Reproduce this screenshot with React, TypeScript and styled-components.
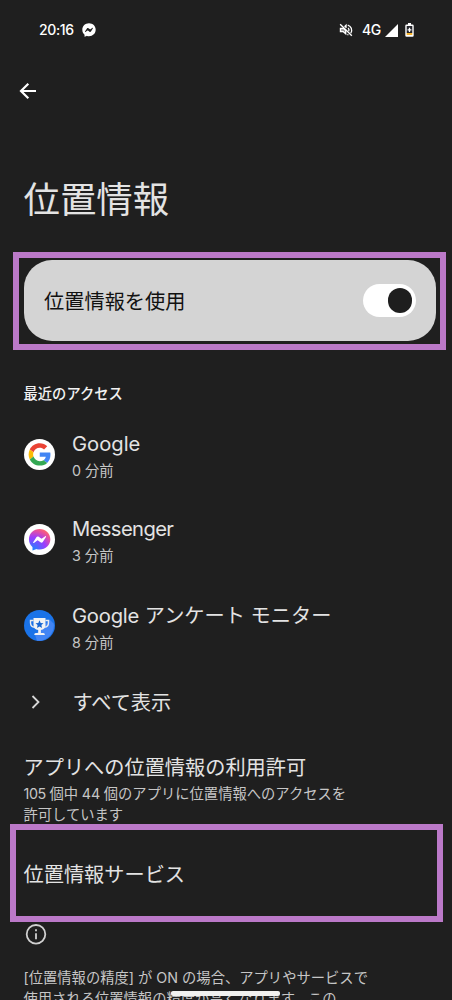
import React, { useId } from 'react';
import styled, { createGlobalStyle } from 'styled-components';

const GlobalStyle = createGlobalStyle`
  * { box-sizing: border-box; }
  html, body { margin: 0; padding: 0; background: #1f1f1f; }
  body { overflow: hidden; }
`;

const Screen = styled.main`
  position: relative;
  width: 452px;
  height: 1000px;
  overflow: hidden;
  display: flex;
  flex-direction: column;
  background: #1f1f1f;
  color: #e3e3e3;
  font-family: Inter, 'Noto Sans CJK JP', sans-serif;
`;

const StatusBar = styled.header`
  flex: none;
  height: 60px;
  padding: 0 38px 0 39px;
  display: flex;
  align-items: center;
  color: #fff;
`;

const Clock = styled.span`
  width: 43px;
  font: 500 14px/20px Inter, sans-serif;
  letter-spacing: -0.35px;
`;

const StatusIcons = styled.div`
  margin-left: auto;
  display: flex;
  align-items: center;
`;

const Network = styled.span`
  margin: 0 3px 0 9px;
  width: 20px;
  font: 500 14px/20px Inter, sans-serif;
  letter-spacing: -0.4px;
`;

const Toolbar = styled.nav`
  flex: none;
  height: 62px;
  padding-left: 16px;
  display: flex;
  align-items: center;
`;

const BackButton = styled.button`
  width: 24px;
  height: 24px;
  padding: 0;
  border: 0;
  background: none;
  color: #fff;
`;

const Title = styled.h1`
  flex: none;
  margin: 50px 0 0 23.5px;
  height: 52px;
  font-family: 'Noto Sans CJK JP', sans-serif;
  font-size: 36.4px;
  line-height: 50px;
  font-weight: 400;
`;

const Highlight = styled.section<{ $left: number; $width: number; $top: number }>`
  flex: none;
  margin: ${p => p.$top}px 0 0 ${p => p.$left}px;
  width: ${p => p.$width}px;
  height: 98.6px;
  border: 6px solid #bb79c8;
`;

const MasterSwitch = styled.div`
  margin: 2.4px 3.8px 0 4.6px;
  height: 81px;
  padding: 0 20.2px 0 20.5px;
  border-radius: 28px;
  display: flex;
  align-items: center;
  justify-content: space-between;
  background: #d4d4d4;
  color: #111;
  font-size: 20.2px;
  line-height: 30px;
`;

const SwitchLabel = styled.span`
  padding-top: 2px;
`;

const Track = styled.span`
  width: 53px;
  height: 33px;
  padding: 4px;
  border-radius: 17px;
  display: flex;
  justify-content: flex-end;
  background: #fff;
`;

const Knob = styled.span`
  width: 24.5px;
  height: 24.5px;
  border-radius: 50%;
  background: #1e1e1e;
`;

const SectionHeading = styled.h2`
  flex: none;
  margin: 34px 0 0 23.5px;
  font-size: 14.3px;
  line-height: 20px;
  font-weight: 500;
  color: #f2f2f2;
`;

const AppList = styled.ul`
  flex: none;
  margin: 21px 0 0;
  padding: 0;
  list-style: none;
`;

const AppRow = styled.li<{ $height: number }>`
  height: ${p => p.$height}px;
  padding-left: 24px;
  display: flex;
  align-items: flex-start;
`;

const AppIcon = styled.span`
  width: 48px;
  height: 31px;
  margin-top: 13.5px;
`;

const RowText = styled.div<{ $offset?: number }>`
  padding-top: ${p => p.$offset ?? 4}px;
  display: flex;
  flex-direction: column;
  gap: 1.5px;
`;

const ItemTitle = styled.span`
  font-size: 20.2px;
  line-height: 30px;
  white-space: pre;
`;

const LatinText = styled.span<{ $tracking: number }>`
  letter-spacing: ${p => p.$tracking}px;
`;

const Caption = styled.span`
  font-size: 14.3px;
  line-height: 20.5px;
  color: #c6c6c6;
  white-space: pre;
`;

const ShowAll = styled.div`
  flex: none;
  margin-top: 3px;
  height: 30px;
  padding-left: 24px;
  display: flex;
  align-items: center;
`;

const ShowAllLabel = styled(ItemTitle)`
  padding: 2px 0 0 0.5px;
`;

const ChevronSlot = styled.span`
  width: 48px;
  height: 24px;
`;

const Permission = styled.section`
  flex: none;
  margin: 36px 0 0 23.5px;
  display: flex;
  flex-direction: column;
`;

const PermissionSummary = styled.div`
  padding-top: 1.5px;
  display: flex;
  flex-direction: column;
`;

const Service = styled.div`
  padding: 30px 0 0 7.5px;
`;

const Notice = styled.footer`
  flex: none;
  padding-left: 23.5px;
  display: flex;
  flex-direction: column;
`;

const InfoSlot = styled.span`
  height: 24px;
  margin-bottom: 22px;
`;

const HomeIndicator = styled.div`
  position: absolute;
  left: 171px;
  top: 991px;
  width: 109px;
  height: 4.5px;
  border-radius: 2px;
  background: #f1f1ef;
`;

const BUBBLE =
  'M12 1.5C6 1.5 1.5 5.9 1.5 11.6c0 3 1.2 5.6 3.2 7.4.2.1.3.4.3.6v3.1l3.4-1.4c.2-.1.4-.1.6 0 1 .3 2 .4 3 .4 6 0 10.5-4.4 10.5-10.1S18 1.5 12 1.5z';
const BOLT =
  'M5.7 14.5 8.8 9.6c.5-.8 1.5-1 2.3-.4l2.4 1.8c.2.2.5.2.8 0l3.2-2.4c.5-.4 1 .2.7.7l-3.1 4.9c-.5.8-1.5 1-2.3.4l-2.4-1.8a.7.7 0 0 0-.8 0l-3.2 2.4c-.5.4-1-.2-.7-.7z';

function StatusMessenger() {
  return (
    <svg width="14" height="14" viewBox="1 1 22 22">
      <path d={BUBBLE} fill="#fff" />
      <path d={BOLT} fill="#1f1f1f" />
    </svg>
  );
}

function MutedIcon() {
  return (
    <svg width="14" height="14" viewBox="0 0 24 24" fill="none" stroke="#fff" strokeWidth="2.3">
      <path d="M2 2 22 22" />
      <path d="M2.5 9.500v5H7l4.500 4V13L8 9.500z" fill="#fff" fillOpacity=".45" />
      <path d="M9.500 6.500 12 4v4.500M15.500 8.500c1.500 1.200 2 3.500 1.200 5.500M15 3.500c6 2 8.500 8 5.200 14M16 19.500l-1.500 1" />
    </svg>
  );
}

function SignalIcon() {
  return (
    <svg width="13" height="13" viewBox="0 0 13 13">
      <path d="M13 0v13H0z" fill="#fff" />
    </svg>
  );
}

function BatteryIcon() {
  return (
    <svg width="9" height="14" viewBox="0 0 9 14">
      <path d="M3 0h3v1.5h1.5A1.2 1.2 0 0 1 8.7 2.7v9.8a1.2 1.2 0 0 1-1.2 1.2h-6A1.2 1.2 0 0 1 .3 12.5V2.7a1.2 1.2 0 0 1 1.2-1.2H3z" fill="#fff" />
      <path d="M1.7 3h5.6v7H1.7z" fill="#25252b" />
      <path d="M1.7 10h5.6v2H1.7z" fill="#f6b32c" />
      <path d="M4.5 4.7v4.2M2.6 6.8h3.8" stroke="#fff" strokeWidth="1.3" />
    </svg>
  );
}

function GoogleIcon() {
  return (
    <svg width="31" height="31" viewBox="0 0 31 31">
      <circle cx="15.5" cy="15.5" r="15.5" fill="#fff" />
      <g transform="translate(4.6 4.3) scale(.465)">
        <path fill="#EA4335" d="M24 9.5c3.54 0 6.71 1.22 9.21 3.6l6.85-6.85C35.9 2.38 30.47 0 24 0 14.62 0 6.51 5.38 2.56 13.22l7.98 6.19C12.43 13.72 17.74 9.5 24 9.5z" />
        <path fill="#4285F4" d="M46.98 24.55c0-1.57-.15-3.09-.38-4.55H24v9.02h12.94c-.58 2.96-2.26 5.48-4.78 7.18l7.73 6c4.51-4.18 7.09-10.36 7.09-17.65z" />
        <path fill="#FBBC05" d="M10.53 28.59c-.48-1.45-.76-2.99-.76-4.59s.27-3.14.76-4.59l-7.98-6.19C.92 16.46 0 20.12 0 24c0 3.88.92 7.54 2.56 10.78l7.97-6.19z" />
        <path fill="#34A853" d="M24 48c6.48 0 11.93-2.13 15.89-5.81l-7.73-6c-2.15 1.45-4.92 2.3-8.16 2.3-6.26 0-11.57-4.22-13.47-9.91l-7.98 6.19C6.51 42.62 14.62 48 24 48z" />
      </g>
    </svg>
  );
}

function MessengerIcon() {
  const id = useId();
  return (
    <svg width="31" height="31" viewBox="0 0 31 31">
      <defs>
        <radialGradient id={id} cx=".2" cy="1" r="1.1">
          <stop offset="0" stopColor="#1688ff" />
          <stop offset=".55" stopColor="#9a3dff" />
          <stop offset=".85" stopColor="#e8509c" />
          <stop offset="1" stopColor="#ff6968" />
        </radialGradient>
      </defs>
      <circle cx="15.5" cy="15.5" r="15.5" fill="#fff" />
      <g transform="translate(3.4 3.4) scale(1.02)">
        <path d={BUBBLE} fill={`url(#${id})`} />
        <path d={BOLT} fill="#fff" />
      </g>
    </svg>
  );
}

function SurveyIcon() {
  return (
    <svg width="31" height="31" viewBox="0 0 31 31">
      <circle cx="15.5" cy="15.5" r="15.5" fill="#1a73e8" />
      <path d="M25.5 9.5 29.8 13.8A15.5 15.5 0 0 1 13 30.8L11 25z" fill="#4285f4" />
      <path d="M9.5 10.5h-3v2.2c0 2.7 1.6 4.3 4.2 4.6M21.5 10.5h3v2.2c0 2.7-1.6 4.3-4.2 4.6" fill="none" stroke="#e8eaed" strokeWidth="1.4" />
      <path d="M9.5 8h12v7.2c0 2.7-1.8 4.4-4.6 4.9v3h2.4c1 0 1.5.7 1.5 1.9H10.3c0-1.2.5-1.9 1.5-1.9h2.4v-3c-2.9-.5-4.7-2.2-4.7-4.9z" fill="#f1f3f4" />
      <path d="m15.5 10.3 1.2 2.6 2.8.3-2.1 1.9.6 2.8-2.5-1.4-2.5 1.4.6-2.8-2.1-1.9 2.8-.3z" fill="#1967d2" />
    </svg>
  );
}

export default function App() {
  return (
    <Screen>
      <GlobalStyle />
      <StatusBar>
        <Clock>20:16</Clock>
        <StatusMessenger />
        <StatusIcons>
          <MutedIcon />
          <Network>4G</Network>
          <SignalIcon />
          <svg width="7" height="1" />
          <BatteryIcon />
        </StatusIcons>
      </StatusBar>

      <Toolbar>
        <BackButton aria-label="戻る">
          <svg width="24" height="24" viewBox="0 0 24 24" fill="none" stroke="currentColor" strokeWidth="2.2">
            <path d="M20 12H5M12.3 4.700 5 12l7.300 7.300" />
          </svg>
        </BackButton>
      </Toolbar>

      <Title>位置情報</Title>

      <Highlight $left={13} $width={433} $top={27.7}>
        <MasterSwitch>
          <SwitchLabel>位置情報を使用</SwitchLabel>
          <Track><Knob /></Track>
        </MasterSwitch>
      </Highlight>

      <SectionHeading>最近のアクセス</SectionHeading>
      <AppList>
        <AppRow $height={85.5}>
          <AppIcon><GoogleIcon /></AppIcon>
          <RowText>
            <ItemTitle><LatinText $tracking={0}>Google</LatinText></ItemTitle>
            <Caption>0 分前</Caption>
          </RowText>
        </AppRow>
        <AppRow $height={86}>
          <AppIcon><MessengerIcon /></AppIcon>
          <RowText $offset={3.5}>
            <ItemTitle><LatinText $tracking={-0.6}>Messenger</LatinText></ItemTitle>
            <Caption>3 分前</Caption>
          </RowText>
        </AppRow>
        <AppRow $height={87}>
          <AppIcon><SurveyIcon /></AppIcon>
          <RowText $offset={4.5}>
            <ItemTitle><LatinText $tracking={-0.2}>Google</LatinText> アンケート モニター</ItemTitle>
            <Caption>8 分前</Caption>
          </RowText>
        </AppRow>
      </AppList>
      <ShowAll>
        <ChevronSlot>
          <svg width="24" height="24" viewBox="0 0 24 24" fill="none" stroke="#d8d8d8" strokeWidth="1.8">
            <path d="m8.5 6 6 6-6 6" />
          </svg>
        </ChevronSlot>
        <ShowAllLabel>すべて表示</ShowAllLabel>
      </ShowAll>

      <Permission>
        <ItemTitle>アプリへの位置情報の利用許可</ItemTitle>
        <PermissionSummary>
          <Caption><LatinText $tracking={-0.4}>105 </LatinText>個中<LatinText $tracking={-0.2}> 44 </LatinText>個のアプリに位置情報へのアクセスを</Caption>
          <Caption>許可しています</Caption>
        </PermissionSummary>
      </Permission>

      <Highlight $left={10} $width={432.5} $top={-1.4}>
        <Service><ItemTitle>位置情報サービス</ItemTitle></Service>
      </Highlight>

      <Notice>
        <InfoSlot>
          <svg width="24" height="24" viewBox="0 0 24 24" fill="none" stroke="#d0d0d0" strokeWidth="1.8">
            <circle cx="12" cy="12.3" r="9.3" />
            <path d="M12 11.300v6M12 7.300v2" />
          </svg>
        </InfoSlot>
        <Caption>[位置情報の精度] が ON の場合、アプリやサービスで</Caption>
        <Caption>使用される位置情報の精度が高くなります。この</Caption>
      </Notice>
      <HomeIndicator />
    </Screen>
  );
}
